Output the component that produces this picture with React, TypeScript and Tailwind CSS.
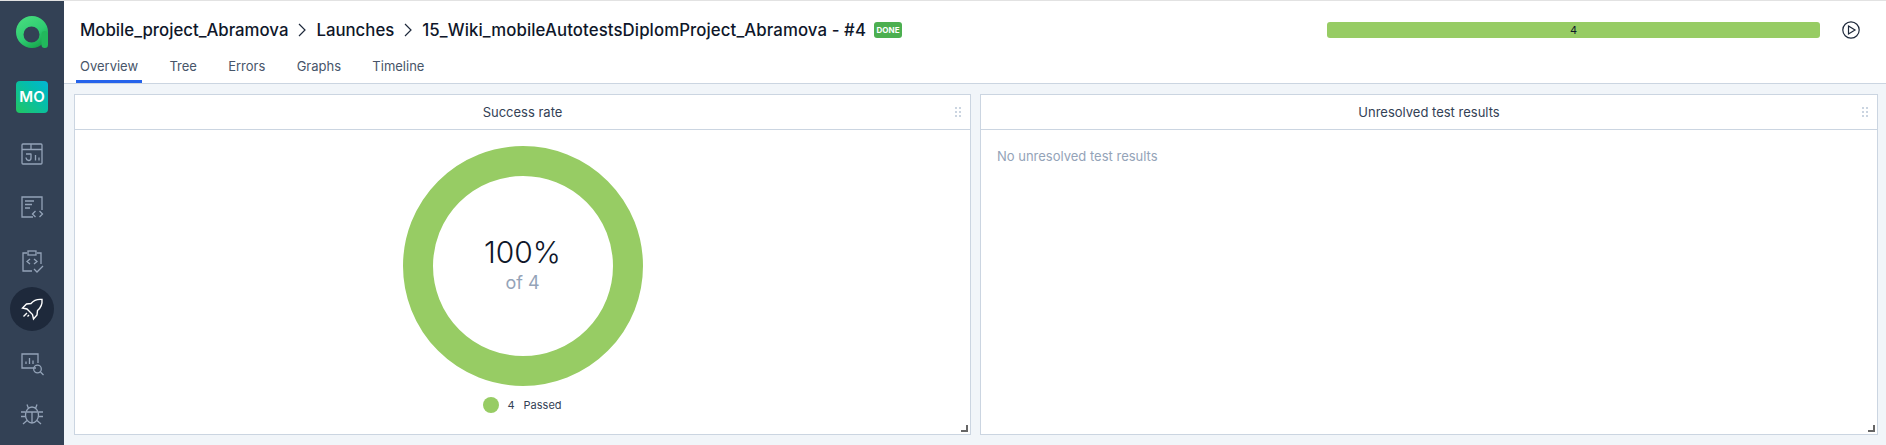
const Grip = () => (
  <svg width="6" height="10" viewBox="0 0 6 10" className="text-[#cbd5e1]" fill="currentColor">
    {[0, 4, 8].flatMap((y) => [0, 4].map((x) => <rect key={`${x}-${y}`} x={x} y={y} width="2" height="2" />))}
  </svg>
);

const Handle = () => (
  <svg width="7" height="7" viewBox="0 0 7 7" className="absolute right-[2px] bottom-[2px]" fill="#666">
    <path d="M5 0h2v7H0V5h5z" />
  </svg>
);

const Chevron = () => (
  <svg width="10" height="16" viewBox="0 0 10 16" fill="none" stroke="#1e293b" strokeWidth="1.2">
    <path d="M2 2l6 6-6 6" />
  </svg>
);

const iconProps = { fill: "none", stroke: "#94a3b8", strokeWidth: 1.3, viewBox: "0 0 24 24", width: 24, height: 24 };

const Logo = () => (
  <svg width="32" height="32" viewBox="0 0 32 32" fill="none">
    <defs>
      <linearGradient id="lg" x1="0.1" y1="0" x2="0.7" y2="1">
        <stop offset="0" stopColor="#4ade80" />
        <stop offset="0.6" stopColor="#2ecc71" />
        <stop offset="1" stopColor="#16a34a" />
      </linearGradient>
    </defs>
    <path
      fillRule="evenodd"
      d="M16 0a16 16 0 1 0 0 32a16 16 0 1 0 0-32zM15.500 10.500a8 8 0 1 1 0 16a8 8 0 1 1 0-16z"
      fill="url(#lg)"
    />
    <rect x="25.500" y="15" width="6.500" height="17" rx="3.200" fill="#22b85c" />
  </svg>
);

const Tab = ({ label, active }: { label: string; active?: boolean }) => (
  <div className={`h-[34px] px-1 flex items-start pt-[7px] border-b-[3px] ${active ? "border-[#2563eb]" : "border-transparent"}`}>
    <span className="text-[13px] text-[#475569] leading-[20px]">{label}</span>
  </div>
);

const Card = ({ title, className, children }: { title: string; className: string; children: React.ReactNode }) => (
  <section className={`relative flex flex-col bg-white border border-[#cbd5e1] ${className}`}>
    <header className="relative h-[35px] shrink-0 flex items-center justify-center pt-[2px] border-b border-[#cbd5e1]">
      <span className="text-[13px] text-[#334155]">{title}</span>
      <span className="absolute right-[9px] top-[12px] flex"><Grip /></span>
    </header>
    {children}
    <Handle />
  </section>
);

export default function App() {
  return (
    <div className="w-[1886px] h-[445px] flex flex-col overflow-hidden bg-[#f1f5f9] text-[#0f172a] font-['Inter',sans-serif]">
      <div className="h-px shrink-0 bg-[#e2e2e2]" />
      <div className="flex-1 flex min-h-0">
        <aside className="w-16 shrink-0 bg-[#334155] flex flex-col items-center pt-[15px]">
          <Logo />
          <div className="mt-[33px] w-8 h-8 rounded bg-gradient-to-tr from-[#22c55e] to-[#06b6d4] flex items-center justify-center text-white font-semibold text-[15px]">MO</div>
          <div className="mt-[29px] flex">
            <svg {...iconProps}>
              <rect x="2" y="2" width="20" height="20" rx="1" />
              <path d="M2 7.500h20M11 2v5.500" />
              <path d="M6 15.500c.3 2.300 1.500 3 2.700 3 1.300 0 2.300-1 2.300-2.500V11.500M6 12h5M15.500 13v5.500M19 15.500v3" />
            </svg>
          </div>
          <div className="mt-[29px] flex">
            <svg {...iconProps}>
              <path d="M13 22H2V2h20v13" />
              <path d="M5 6h9M5 9.500h7M5 13h5" />
              <path d="M15.500 16l-3 3 3 3M19.500 16l3 3-3 3" />
            </svg>
          </div>
          <div className="mt-[30px] flex">
            <svg {...iconProps}>
              <path d="M7 4H3v18h9M17 4h4v11" />
              <rect x="8" y="2" width="8" height="4" />
              <path d="M10 10l-3 2.500 3 2.500M14 10l3 2.500-3 2.500" />
              <path d="M14 20l3 3 6-6" />
            </svg>
          </div>
          <div className="mt-[14px] w-11 h-11 rounded-full bg-[#1e293b] flex items-center justify-center">
            <svg width="24" height="24" viewBox="0 0 24 24" fill="none" stroke="#fff" strokeWidth="1.4">
              <path d="M22 2.500c-5-.500-8.500 1-11 4L6.500 7 2.500 11l4.500 1 5.500 5.500 1 4.500 3.500-4 .5-4.500c3-2.500 5-6 4.500-11z" />
              <path d="M7 16l-3.500 3.500M9 18l-1.500 1.500" />
            </svg>
          </div>
          <div className="mt-[21px] flex">
            <svg {...iconProps}>
              <path d="M16 16H2V2h16v9" />
              <path d="M6 12V9.500M9.500 12V6M13 12V8.500" />
              <circle cx="17.500" cy="17" r="3.800" />
              <path d="M20.500 20l3 3" />
            </svg>
          </div>
          <div className="mt-[25px] flex">
            <svg {...iconProps}>
              <ellipse cx="12" cy="14" rx="6.500" ry="8" />
              <path d="M6.500 11h11M12 11v11M8.500 7.500L7 3.500M15.500 7.500L17 3.500M5.500 11H1M18.500 11H23M5.500 15.500H1M18.500 15.500H23M7 19.500L3 23M17 19.500l4 3.500" />
            </svg>
          </div>
        </aside>
        <main className="flex-1 min-w-0 flex flex-col">
          <div className="h-[83px] shrink-0 bg-white border-b border-[#cbd5e1] flex flex-col">
            <div className="h-[48px] shrink-0 flex items-center pl-4 pr-[26px] pt-[14px] pb-[4px]">
              <div className="flex items-center gap-[9px] text-[16.8px] font-medium leading-none whitespace-nowrap">
                <span>Mobile_project_Abramova</span>
                <Chevron />
                <span>Launches</span>
                <Chevron />
                <span className="tracking-[0.1px]">15_Wiki_mobileAutotestsDiplomProject_Abramova - #4</span>
              </div>
              <span className="ml-2 h-4 w-[28px] rounded-[3px] bg-[#4caf50] text-white text-[8px] font-bold flex items-center justify-center">DONE</span>
              <div className="ml-auto w-[493px] h-4 rounded-[3px] bg-[#97cc64] flex items-center justify-center text-[11px]">4</div>
              <svg className="ml-[22px]" width="18" height="18" viewBox="0 0 18 18" fill="none" stroke="#1e293b" strokeWidth="1.200">
                <circle cx="9" cy="9" r="8.200" />
                <path d="M6.500 5l6.500 4-6.500 4z" />
              </svg>
            </div>
            <nav className="flex pl-3 gap-[23.300px]">
              <Tab label="Overview" active />
              <Tab label="Tree" />
              <Tab label="Errors" />
              <Tab label="Graphs" />
              <Tab label="Timeline" />
            </nav>
          </div>
          <div className="flex-1 min-h-0 flex gap-[9px] pl-[10px] pr-[8px] pt-[10px] pb-[10px]">
            <Card title="Success rate" className="w-[897px]">
              <div className="flex flex-col items-center pt-4">
                <div className="relative w-60 h-60 flex flex-col items-center justify-center">
                  <svg className="absolute inset-0" width="240" height="240" viewBox="0 0 240 240" fill="none">
                    <circle cx="120" cy="120" r="105" stroke="#97cc64" strokeWidth="30" />
                  </svg>
                  <span className="text-[30px] font-light leading-[34px] text-[#0f172a] mt-[-2px] mb-[2px]">100%</span>
                  <span className="text-[18px] leading-[24px] text-[#94a3b8] font-normal">of 4</span>
                </div>
                <div className="mt-[11px] flex items-center text-[11px] text-[#334155]">
                  <span className="w-4 h-4 rounded-full bg-[#97cc64] mr-2" />
                  <span className="mr-[9px]">4</span>
                  <span>Passed</span>
                </div>
              </div>
            </Card>
            <Card title="Unresolved test results" className="flex-1">
              <p className="pt-4 pl-4 text-[13px] text-[#94a3b8] leading-[20px]">No unresolved test results</p>
            </Card>
          </div>
        </main>
      </div>
    </div>
  );
}
